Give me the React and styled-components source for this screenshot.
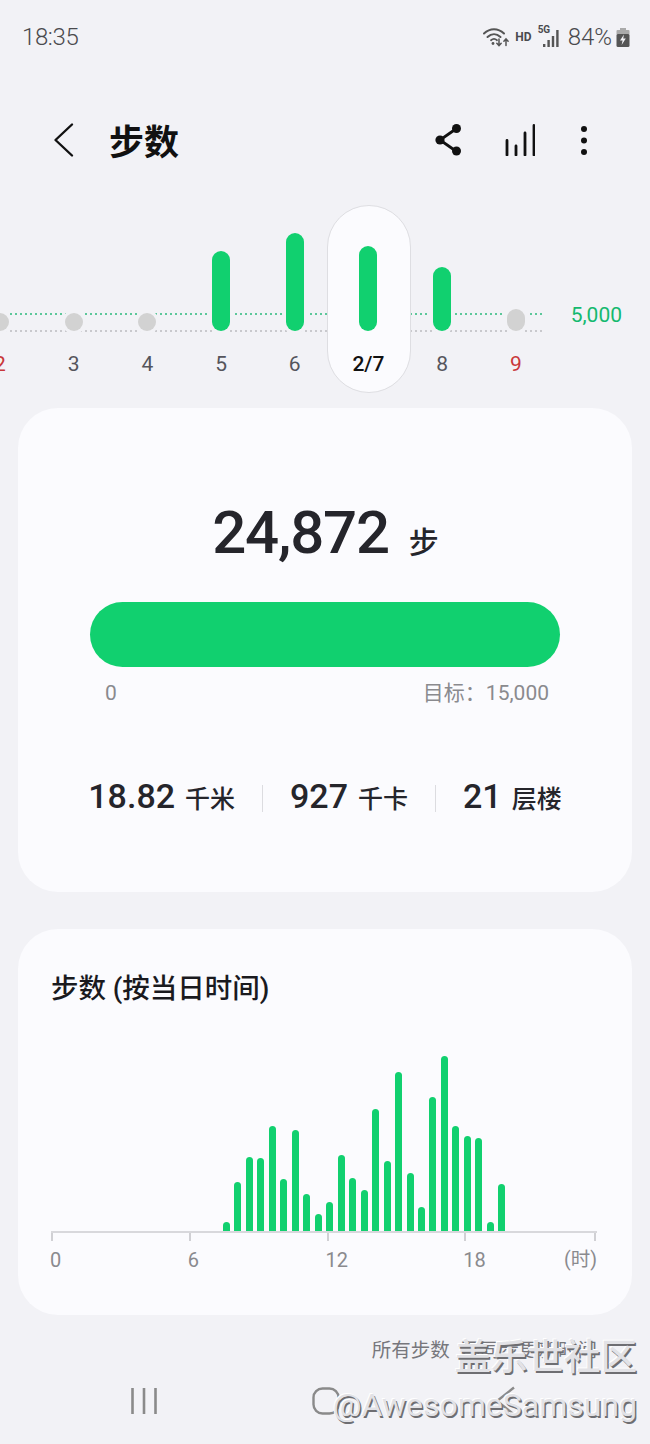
import React from "react";
import styled, { createGlobalStyle } from "styled-components";

const GlobalStyle = createGlobalStyle`
    html, body {
        margin: 0;
        padding: 0;
        background: #f2f2f6;
        font-family: Roboto, "Noto Sans CJK SC", sans-serif;
    }
`;

const days = [
    { label: "2", red: true, h: 18, grey: true },
    { label: "3", h: 18, grey: true },
    { label: "4", h: 18, grey: true },
    { label: "5", h: 80 },
    { label: "6", h: 98 },
    { label: "2/7", h: 85, selected: true },
    { label: "8", h: 64 },
    { label: "9", red: true, h: 22, grey: true },
];

const hourly = [9, 49, 74, 73, 105, 52, 101, 37, 17, 29, 76, 53, 41, 122, 70, 159, 58, 24, 134, 175, 105, 95, 93, 9, 47];

const ticks = [
    { label: "0", width: 138 },
    { label: "6", width: 138 },
    { label: "12", width: 138 },
    { label: "18", width: 132 },
];

function StatusIcons() {
    return (
        <StatusRight>
            <svg width="26" height="20" viewBox="0 0 26 20" fill="none" stroke="#555" strokeLinecap="round">
                <path d="M1 6.500C7 .8 15 .8 21 6.500" strokeWidth="2" />
                <path d="M4.500 10C8.500 6.200 13.500 6.200 17.500 10" strokeWidth="2" />
                <path d="M8 13.200c2-1.700 4-1.700 6 0" strokeWidth="1.800" />
                <circle cx="10" cy="16.500" r="1.400" fill="#555" stroke="none" />
                <path d="M16 12v6.500M13.800 16.200l2.200 2.400 2.200-2.400" strokeWidth="1.500" />
                <path d="M23 18.500v-6.500M20.900 14.200l2.100-2.400 2.100 2.400" strokeWidth="1.500" />
            </svg>
            <HdText>HD</HdText>
            <SignalWrap>
                <FiveG>5G</FiveG>
                <svg width="23" height="18" viewBox="0 0 23 18" fill="#555">
                    <rect x="4" y="15" width="2.400" height="3" />
                    <rect x="8.400" y="11" width="2.400" height="7" />
                    <rect x="12.800" y="7" width="2.400" height="11" />
                    <rect x="17.200" y="1" width="2.400" height="17" />
                </svg>
            </SignalWrap>
            <BatteryText>84%</BatteryText>
            <svg width="14" height="19" viewBox="0 0 14 19">
                <rect x="4" y="0" width="6" height="3" fill="#aaa" />
                <rect x="0.500" y="2" width="13" height="5" rx="1" fill="#aaa" />
                <rect x="0.500" y="6" width="13" height="13" rx="1.500" fill="#555" />
                <path d="M8 6.500 4 12.500h2.600L5.600 17l4.200-6.500H7.200z" fill="#f2f2f6" />
            </svg>
        </StatusRight>
    );
}

export default function App() {
    return (
        <Page>
            <GlobalStyle />
            <StatusBar>
                <Clock>18:35</Clock>
                <StatusIcons />
            </StatusBar>

            <Toolbar>
                <BackIcon width="24" height="36" viewBox="0 0 24 36" fill="none" stroke="#111" strokeWidth="2.400" strokeLinecap="round" strokeLinejoin="round">
                    <path d="M20 2.500 3.500 18 20 33.500" />
                </BackIcon>
                <Title>步数</Title>
                <ToolActions>
                    <svg width="28" height="32" viewBox="0 0 28 32" fill="#111" stroke="#111">
                        <path d="M22.500 4.500 6 16l16.500 11.500" fill="none" strokeWidth="2.800" />
                        <circle cx="6" cy="16" r="4.600" stroke="none" />
                        <circle cx="22.500" cy="4.500" r="4.500" stroke="none" />
                        <circle cx="22.500" cy="27" r="4.500" stroke="none" />
                    </svg>
                    <svg width="30" height="32" viewBox="0 0 30 32" stroke="#111" strokeWidth="2.800" strokeLinecap="round">
                        <path d="M2 31V16.500M11 31V22M20 31V9M29 31V1.500" />
                    </svg>
                    <svg width="12" height="32" viewBox="0 0 12 32" fill="#111">
                        <circle cx="6" cy="5" r="3" />
                        <circle cx="6" cy="16.500" r="3" />
                        <circle cx="6" cy="28" r="3" />
                    </svg>
                </ToolActions>
            </Toolbar>

            <WeekChart>
                <GoalLine />
                <ZeroLine />
                <DayRow>
                    {days.map((day) => (
                        <DayColumn key={day.label}>
                            {day.selected && <SelectedPill />}
                            <DayPlot>
                                <DayBar $grey={day.grey} $selected={day.selected} style={{ height: day.h }} />
                            </DayPlot>
                            <DayLabel $red={day.red} $selected={day.selected}>{day.label}</DayLabel>
                        </DayColumn>
                    ))}
                    <GoalValue>5,000</GoalValue>
                </DayRow>
            </WeekChart>

            <SummaryCard>
                <StepLine>
                    <StepCount>24,872</StepCount>
                    <StepUnit>步</StepUnit>
                </StepLine>
                <ProgressBar />
                <ProgressLabels>
                    <span>0</span>
                    <span>目标：15,000</span>
                </ProgressLabels>
                <Stats>
                    <Stat><StatValue>18.82</StatValue><StatUnit>千米</StatUnit></Stat>
                    <StatDivider />
                    <Stat><StatValue>927</StatValue><StatUnit>千卡</StatUnit></Stat>
                    <StatDivider />
                    <Stat><StatValue>21</StatValue><StatUnit>层楼</StatUnit></Stat>
                </Stats>
            </SummaryCard>

            <HourlyCard>
                <CardTitle>步数 (按当日时间)</CardTitle>
                <HourlyBars>
                    {hourly.map((h, i) => (
                        <HourBar key={i} style={{ height: h }} />
                    ))}
                </HourlyBars>
                <Axis>
                    {ticks.map((tick) => (
                        <AxisCell key={tick.label} style={{ width: tick.width }}>
                            <AxisLabel>{tick.label}</AxisLabel>
                        </AxisCell>
                    ))}
                    <AxisEnd>(时)</AxisEnd>
                </Axis>
            </HourlyCard>

            <FootNote>所有步数 已同步更新时间</FootNote>

            <NavBar>
                <svg width="28" height="28" viewBox="0 0 28 28" stroke="#8a8a8a" strokeWidth="2.600">
                    <path d="M2.500 1v26M14 1v26M25.500 1v26" />
                </svg>
                <svg width="28" height="28" viewBox="0 0 28 28" fill="none" stroke="#8a8a8a" strokeWidth="2.400">
                    <rect x="1.500" y="1.500" width="25" height="25" rx="9" />
                </svg>
                <svg width="22" height="30" viewBox="0 0 22 30" fill="none" stroke="#8a8a8a" strokeWidth="2.400">
                    <path d="M20 1.500 3 15l17 13.500" />
                </svg>
            </NavBar>

            <Watermark>
                <WatermarkCn>盖乐世社区</WatermarkCn>
                <WatermarkEn>@AwesomeSamsung</WatermarkEn>
            </Watermark>
        </Page>
    );
}

const Page = styled.div`
    position: relative;
    width: 650px;
    height: 1444px;
    overflow: hidden;
    background: #f2f2f6;
`;
const StatusBar = styled.div`
    display: flex;
    justify-content: space-between;
    align-items: center;
    height: 74px;
    padding: 0 20px 0 22px;
    box-sizing: border-box;
    color: #4a4a4e;
`;
const Clock = styled.span`
    font-size: 24px;
    font-weight: 300;
    letter-spacing: -0.4px;
`;
const StatusRight = styled.div`
    display: flex;
    align-items: center;
`;
const HdText = styled.span`
    margin-left: 6px;
    font-size: 12px;
    font-weight: 700;
`;
const SignalWrap = styled.div`
    position: relative;
    display: flex;
    margin-left: 7px;
    padding-top: 2px;
`;
const FiveG = styled.span`
    position: absolute;
    left: -1px;
    top: -3px;
    font-size: 10px;
    font-weight: 700;
`;
const BatteryText = styled.span`
    margin: 0 4px 0 6px;
    font-size: 24px;
    font-weight: 300;
`;
const Toolbar = styled.div`
    display: flex;
    align-items: center;
    height: 131px;
    padding: 0 60px 0 52px;
    box-sizing: border-box;
`;
const BackIcon = styled.svg`
    flex-shrink: 0;
`;
const Title = styled.h1`
    margin: 0 0 0 33px;
    font-size: 35px;
    font-weight: 700;
    color: #111;
`;
const ToolActions = styled.div`
    display: flex;
    align-items: center;
    gap: 43px;
    margin-left: auto;
`;
const WeekChart = styled.div`
    position: relative;
    height: 188px;
    overflow: hidden;
    margin-bottom: 15px;
`;
const GuideLine = styled.div`
    position: absolute;
    left: 0;
    width: 544px;
    height: 2px;
`;
const GoalLine = styled(GuideLine)`
    top: 108px;
    background: repeating-linear-gradient(90deg, #5cc79a 0 2px, transparent 2px 5px);
`;
const ZeroLine = styled(GuideLine)`
    top: 125px;
    background: repeating-linear-gradient(90deg, #c9c9cd 0 2px, transparent 2px 5px);
`;
const DayRow = styled.div`
    display: flex;
    margin-left: -36.85px;
`;
const DayColumn = styled.div`
    position: relative;
    flex: 0 0 73.7px;
    display: flex;
    flex-direction: column;
    align-items: center;
`;
const SelectedPill = styled.div`
    position: absolute;
    top: 0;
    left: -5px;
    width: 84px;
    height: 188px;
    box-sizing: border-box;
    border: 1px solid #dedee2;
    border-radius: 42px;
    background: #fbfbfe;
`;
const DayPlot = styled.div`
    position: relative;
    display: flex;
    align-items: flex-end;
    height: 126px;
`;
const DayBar = styled.div`
    width: 18px;
    border-radius: 9px;
    background: ${(p) => (p.$grey ? "#d2d2d2" : "#11d06f")};
    box-shadow: ${(p) => (p.$selected ? "none" : "0 0 0 3px #f2f2f6")};
`;
const DayLabel = styled.span`
    position: relative;
    margin-top: 20px;
    font-size: 21px;
    line-height: 26px;
    font-weight: ${(p) => (p.$selected ? 500 : 400)};
    color: ${(p) => (p.$selected ? "#111" : p.$red ? "#c9383a" : "#55555c")};
`;
const GoalValue = styled.span`
    flex-shrink: 0;
    margin: 97px 0 0 18px;
    font-size: 21px;
    line-height: 26px;
    color: #14b96f;
`;
const Card = styled.section`
    margin: 0 18px;
    box-sizing: border-box;
    border-radius: 40px;
    background: #fbfbfe;
`;
const SummaryCard = styled(Card)`
    height: 484px;
    padding: 90px 72px 0;
`;
const StepLine = styled.div`
    display: flex;
    justify-content: center;
    align-items: baseline;
    height: 70px;
    line-height: 70px;
    padding-left: 1px;
    color: #25252b;
`;
const StepCount = styled.span`
    font-size: 60px;
    font-weight: 500;
    letter-spacing: -1.2px;
`;
const StepUnit = styled.span`
    margin-left: 20px;
    font-size: 30px;
    font-weight: 500;
`;
const ProgressBar = styled.div`
    height: 65px;
    margin-top: 34px;
    border-radius: 33px;
    background: #11d06f;
`;
const ProgressLabels = styled.div`
    display: flex;
    justify-content: space-between;
    margin-top: 13px;
    padding: 0 11px 0 15px;
    font-size: 21px;
    line-height: 26px;
    color: #8a8a8e;
`;
const Stats = styled.div`
    display: flex;
    justify-content: center;
    align-items: center;
    gap: 27px;
    margin: 70px -30px 0;
    color: #25252b;
`;
const Stat = styled.div`
    display: flex;
    align-items: baseline;
    gap: 10px;
    line-height: 40px;
`;
const StatValue = styled.span`
    font-size: 34px;
    font-weight: 500;
`;
const StatUnit = styled.span`
    font-size: 25px;
    font-weight: 500;
`;
const StatDivider = styled.div`
    width: 1px;
    height: 27px;
    background: #dcdce0;
`;
const HourlyCard = styled(Card)`
    height: 386px;
    margin-top: 37px;
    padding: 42px 0 0 33px;
`;
const CardTitle = styled.h2`
    margin: 0;
    font-size: 27.5px;
    line-height: 36px;
    font-weight: 500;
    color: #1a1a1e;
`;
const HourlyBars = styled.div`
    display: flex;
    align-items: flex-end;
    gap: 4.47px;
    height: 224px;
    padding-left: 172px;
`;
const HourBar = styled.div`
    width: 7px;
    border-radius: 3.5px 3.5px 0 0;
    background: #11d06f;
`;
const Axis = styled.div`
    display: flex;
    width: 546px;
    box-sizing: border-box;
    border-top: 2px solid #d8d8dc;
`;
const AxisCell = styled.div`
    box-sizing: border-box;
    height: 50px;
    padding-top: 14px;
    background: linear-gradient(#d0d0d4, #d0d0d4) left top / 2px 8px no-repeat;
`;
const AxisLabel = styled.span`
    margin-left: -1px;
    font-size: 20px;
    line-height: 26px;
    color: #8a8a8e;
`;
const AxisEnd = styled.span`
    position: relative;
    width: 0;
    display: flex;
    justify-content: flex-end;
    padding-top: 14px;
    margin-left: 1px;
    font-size: 19.5px;
    line-height: 26px;
    white-space: nowrap;
    color: #8a8a8e;
    &::before {
        content: "";
        position: absolute;
        right: 1px;
        top: 0;
        width: 2px;
        height: 8px;
        background: #d0d0d4;
    }
`;
const FootNote = styled.p`
    margin: 24px 53px 0 0;
    font-size: 19.5px;
    line-height: 24px;
    word-spacing: 6px;
    text-align: right;
    color: #77777c;
`;
const NavBar = styled.nav`
    display: flex;
    align-items: center;
    height: 28px;
    margin-top: 24px;
    padding-left: 130px;
    gap: 154px;
`;
const Watermark = styled.div`
    position: absolute;
    right: 13px;
    top: 1336px;
    text-align: right;
    color: #e2e2e6;
    text-shadow: 1.5px 1.5px 0 #6e6e72, -1px -1px 0 #fff;
`;
const WatermarkCn = styled.div`
    font-size: 36.5px;
    line-height: 44px;
    font-weight: 500;
`;
const WatermarkEn = styled.div`
    margin-top: 5px;
    font-size: 32px;
    line-height: 40px;
`;
